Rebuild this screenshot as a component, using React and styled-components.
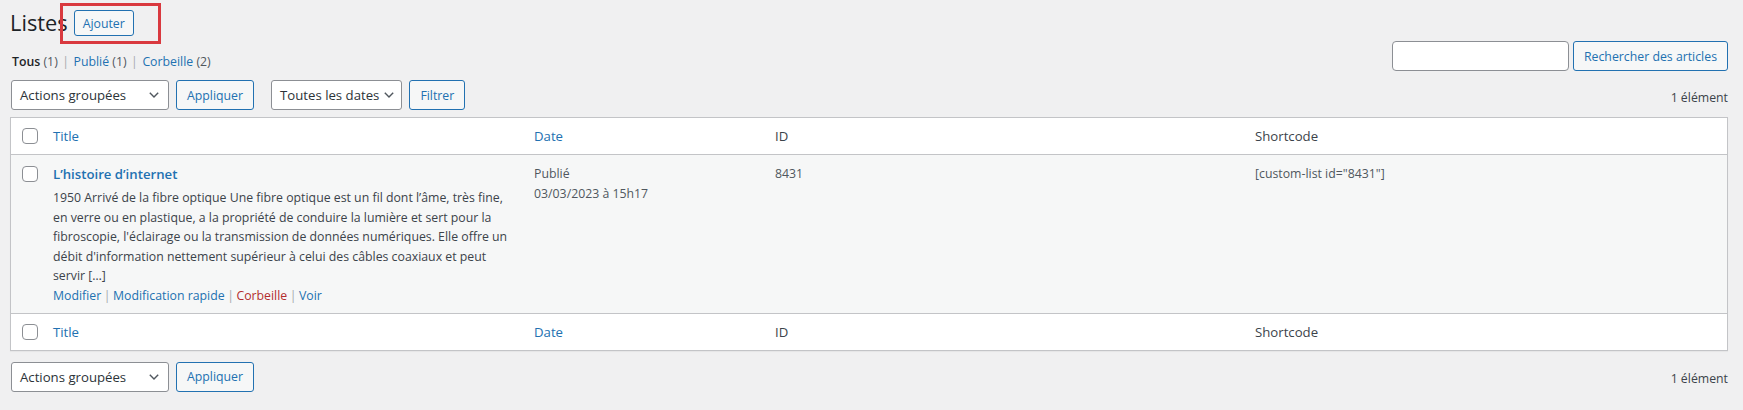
import React from "react";
import styled, { createGlobalStyle } from "styled-components";

const FONT = `"Open Sans", "Noto Sans", "Liberation Sans", sans-serif`;

const GlobalStyle = createGlobalStyle`
  body {
    margin: 0;
    background: #f0f0f1;
    font-family: ${FONT};
    font-size: 12.3px;
    color: #3c434a;
  }
  * {
    box-sizing: border-box;
  }
`;

const Chevron = () => (
  <svg width="10" height="6" viewBox="0 0 10 6" fill="none">
    <path d="M0.8 0.8 L5 5 L9.2 0.8" stroke="#50575e" strokeWidth="1.4" />
  </svg>
);

const App = () => {
  return (
    <>
      <GlobalStyle />
      <Page>
        <HeaderRow>
          <PageTitle>Listes</PageTitle>
          <AddWrap>
            <AddButton>Ajouter</AddButton>
          </AddWrap>
        </HeaderRow>

        <FilterRow>
          <Views>
            <Current>Tous</Current> <Count>(1)</Count>
            <Sep>|</Sep>
            <ViewLink>Publié</ViewLink> <Count>(1)</Count>
            <Sep>|</Sep>
            <ViewLink>Corbeille</ViewLink> <Count>(2)</Count>
          </Views>
          <SearchBox>
            <SearchInput type="search" />
            <Button>Rechercher des articles</Button>
          </SearchBox>
        </FilterRow>

        <TableNav $top={9}>
          <Select $width={158}>
            <span>Actions groupées</span>
            <Chevron />
          </Select>
          <Button>Appliquer</Button>
          <Select $gap={5} $left={10} $right={7}>
            <span>Toutes les dates</span>
            <Chevron />
          </Select>
          <Button>Filtrer</Button>
          <ItemCount>1 élément</ItemCount>
        </TableNav>

        <Table>
          <HeadRow>
            <CheckCell $center>
              <Checkbox type="checkbox" />
            </CheckCell>
            <HeadCell $link>Title</HeadCell>
            <HeadCell $link>Date</HeadCell>
            <HeadCell>ID</HeadCell>
            <HeadCell>Shortcode</HeadCell>
          </HeadRow>

          <BodyRow>
            <CheckCell>
              <Checkbox type="checkbox" />
            </CheckCell>
            <Cell>
              <RowTitle>L’histoire d’internet</RowTitle>
              <Excerpt>
                1950 Arrivé de la fibre optique Une fibre optique est un fil
                dont l’âme, très fine, en verre ou en plastique, a la propriété
                de conduire la lumière et sert pour la fibroscopie, l'éclairage
                ou la transmission de données numériques. Elle offre un débit
                d'information nettement supérieur à celui des câbles coaxiaux et
                peut servir […]
              </Excerpt>
              <RowActions>
                <ActionLink>Modifier</ActionLink>
                <Sep $small>|</Sep>
                <ActionLink>Modification rapide</ActionLink>
                <Sep $small>|</Sep>
                <ActionLink $danger>Corbeille</ActionLink>
                <Sep $small>|</Sep>
                <ActionLink>Voir</ActionLink>
              </RowActions>
            </Cell>
            <Cell>
              <Line>Publié</Line>
              <Line>03/03/2023 à 15h17</Line>
            </Cell>
            <Cell>
              <Line>8431</Line>
            </Cell>
            <Cell>
              <Line>[custom-list id="8431"]</Line>
            </Cell>
          </BodyRow>

          <FootRow>
            <CheckCell $center>
              <Checkbox type="checkbox" />
            </CheckCell>
            <HeadCell $link>Title</HeadCell>
            <HeadCell $link>Date</HeadCell>
            <HeadCell>ID</HeadCell>
            <HeadCell>Shortcode</HeadCell>
          </FootRow>
        </Table>

        <TableNav $top={11}>
          <Select $width={158}>
            <span>Actions groupées</span>
            <Chevron />
          </Select>
          <Button>Appliquer</Button>
          <ItemCount>1 élément</ItemCount>
        </TableNav>
      </Page>
    </>
  );
};

const Page = styled.div`
  padding: 0 15px 20px 10px;
`;

const HeaderRow = styled.div`
  display: flex;
  align-items: center;
  padding-top: 8px;
  height: 38px;
`;

const PageTitle = styled.h1`
  margin: 0;
  font-size: 21.8px;
  font-weight: 400;
  line-height: 30px;
  color: #1d2327;
`;

const AddWrap = styled.span`
  position: relative;
  margin-left: 6px;
  display: inline-flex;
  &::after {
    content: "";
    position: absolute;
    left: -14px;
    top: -7px;
    right: -27px;
    bottom: -8px;
    border: 3px solid #d9393f;
    pointer-events: none;
  }
`;

const AddButton = styled.button`
  height: 26px;
  padding: 0 8px;
  font-family: ${FONT};
  font-size: 12.3px;
  font-weight: 500;
  color: #2271b1;
  background: #f6f7f7;
  border: 1px solid #2271b1;
  border-radius: 3px;
`;

const FilterRow = styled.div`
  display: flex;
  justify-content: space-between;
  align-items: flex-start;
  height: 30px;
  margin-top: 3px;
`;

const Views = styled.div`
  padding: 12px 0 0 2px;
  line-height: 18px;
  color: #50575e;
`;

const Current = styled.span`
  font-weight: 600;
  color: #1d2327;
`;

const Count = styled.span`
  color: #50575e;
`;

const ViewLink = styled.span`
  color: #2271b1;
`;

const Sep = styled.span`
  color: #a7aaad;
  margin: 0 ${(p) => (p.$small ? "2.5px" : "4.5px")};
`;

const SearchBox = styled.div`
  display: flex;
  gap: 4px;
`;

const SearchInput = styled.input`
  width: 177px;
  height: 30px;
  border: 1px solid #8c8f94;
  border-radius: 4px;
  background: #fff;
  padding: 0 8px;
`;

const Button = styled.button`
  height: 30px;
  padding: 0 10px;
  font-family: ${FONT};
  font-size: 12.3px;
  color: #2271b1;
  background: #f6f7f7;
  border: 1px solid #2271b1;
  border-radius: 3px;
  white-space: nowrap;
`;

const TableNav = styled.div`
  display: flex;
  align-items: center;
  gap: 7px;
  height: 30px;
  margin-top: ${(p) => p.$top}px;
  padding-left: 1px;
`;

const Select = styled.div`
  display: flex;
  align-items: center;
  justify-content: space-between;
  gap: ${(p) => p.$gap || 8}px;
  width: ${(p) => (p.$width ? `${p.$width}px` : "auto")};
  height: 30px;
  margin-left: ${(p) => p.$left || 0}px;
  padding: 0 ${(p) => p.$right || 9}px 0 8px;
  font-size: 13.2px;
  color: #2c3338;
  background: #fff;
  border: 1px solid #8c8f94;
  border-radius: 3px;
  white-space: nowrap;
`;

const ItemCount = styled.div`
  margin-left: auto;
  color: #3c434a;
  padding-top: 4px;
`;

const Table = styled.div`
  margin-top: 7px;
  background: #fff;
  border: 1px solid #c3c4c7;
  box-shadow: 0 1px 1px rgba(0, 0, 0, 0.04);
`;

const Columns = styled.div`
  display: grid;
  grid-template-columns: 32px 481px 241px 480px 1fr;
`;

const HeadRow = styled(Columns)`
  height: 37px;
  border-bottom: 1px solid #c3c4c7;
`;

const FootRow = styled(Columns)`
  height: 37px;
  border-top: 1px solid #c3c4c7;
`;

const BodyRow = styled(Columns)`
  background: #f6f7f7;
`;

const CheckCell = styled.div`
  display: flex;
  align-items: ${(p) => (p.$center ? "center" : "flex-start")};
  padding: ${(p) => (p.$center ? "0 0 0 11px" : "11px 0 0 11px")};
`;

const Checkbox = styled.input`
  appearance: none;
  margin: 0;
  width: 16px;
  height: 16px;
  border: 1px solid #8c8f94;
  border-radius: 4px;
  background: #fff;
`;

const HeadCell = styled.div`
  display: flex;
  align-items: center;
  padding: 0 10px;
  font-size: 13.2px;
  color: ${(p) => (p.$link ? "#2271b1" : "#3c434a")};
`;

const Cell = styled.div`
  padding: 9px 10px 7px;
  color: #50575e;
`;

const RowTitle = styled.div`
  font-size: 13.2px;
  font-weight: 600;
  line-height: 20px;
  color: #2271b1;
`;

const Excerpt = styled.p`
  margin: 4px 0 0;
  line-height: 19.6px;
  color: #3c434a;
`;

const RowActions = styled.div`
  line-height: 19.6px;
`;

const ActionLink = styled.span`
  color: ${(p) => (p.$danger ? "#b32d2e" : "#2271b1")};
`;

const Line = styled.div`
  line-height: 19.5px;
  color: #50575e;
`;

export default App;
